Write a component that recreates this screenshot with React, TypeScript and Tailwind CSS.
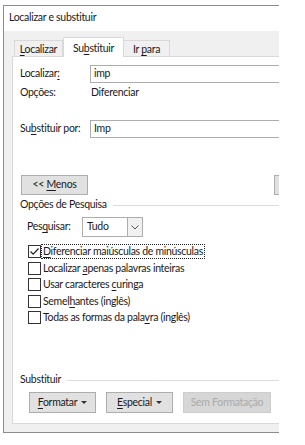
import React from "react";

const U = ({ children }: { children: React.ReactNode }) => (
  <span className="underline underline-offset-[2px] decoration-[1px]">{children}</span>
);

const Check = ({ checked, label, h, focus }: { checked?: boolean; label: React.ReactNode; h: string; focus?: boolean }) => (
  <div className={`flex items-center pl-[8px] ${h}`}>
    <div className="w-[13px] h-[13px] border border-[#333333] bg-white flex items-center justify-center shrink-0">
      {checked && (
        <svg width="11" height="11" viewBox="0 0 11 11">
          <path d="M1.5 5.5 L4.2 8.2 L9.5 2.5" fill="none" stroke="#222" strokeWidth="1.2" />
        </svg>
      )}
    </div>
    <div className={`ml-[1px] px-[1px] leading-[13px] ${focus ? "outline outline-1 outline-dotted outline-[#222]" : ""}`}>{label}</div>
  </div>
);

const Btn = ({ children, w, disabled }: { children: React.ReactNode; w: string; disabled?: boolean }) => (
  <div
    className={`${w} h-[21px] flex items-center justify-center border ${
      disabled ? "bg-[#d6d6d6] border-[#cdcdcd] text-[#ababab]" : "bg-[#e1e1e1] border-[#adadad]"
    }`}
  >
    {children}
  </div>
);

const Arrow = () => (
  <svg width="6" height="3" viewBox="0 0 6 3" className="ml-[4px]">
    <path d="M0 0 H6 L3 3 Z" fill="#333" />
  </svg>
);

export default function App() {
  return (
    <div
      className="w-[305px] h-[445px] bg-white overflow-hidden text-[10.5px] tracking-[-0.3px] text-[#1a1a1a]"
      style={{ fontFamily: "Lato, 'Noto Sans', sans-serif" }}
    >
      <div className="ml-[3px] mt-[5px] w-[276px] h-[428px] overflow-hidden border-t border-l border-b border-[#8c8c8c] flex flex-col">
        <div className="h-[25px] bg-white pl-[5px] pt-[4px] leading-[14px]">Localizar e substituir</div>
        <div className="flex-1 bg-[#f0f0f0] pl-[8px] flex flex-col">
          <div className="h-[25px] flex items-end pl-[2px] shrink-0">
            <div className="w-[49px] h-[16px] border border-b-0 border-[#d9d9d9] bg-[#f0f0f0] flex items-center justify-center leading-[14px] pt-[1px]">
              <span><U>L</U>ocalizar</span>
            </div>
            <div className="w-[61px] h-[20px] -mb-[1px] relative z-10 border border-b-0 border-[#d9d9d9] bg-white flex items-start justify-center pt-[3px] leading-[14px]">
              <span>Su<U>b</U>stituir</span>
            </div>
            <div className="w-[46px] h-[16px] border border-b-0 border-l-0 border-[#d9d9d9] bg-[#f0f0f0] flex items-center justify-center leading-[14px] pt-[1px]">
              <span>Ir <U>p</U>ara</span>
            </div>
          </div>
          <div className="w-[300px] h-[368px] bg-white border border-[#d9d9d9] pl-[7px] flex flex-col shrink-0">
            <div className="mt-[8px] h-[18px] flex items-center">
              <div className="w-[70px]">Localizar<U>:</U></div>
              <div className="flex-1 h-[18px] border border-[#adadad] pl-[3px] flex items-center">imp</div>
            </div>
            <div className="mt-[2px] h-[16px] flex items-center">
              <div className="w-[71px]">Opções:</div>
              <div>Diferenciar</div>
            </div>
            <div className="mt-[19px] h-[18px] flex items-center">
              <div className="w-[70px] whitespace-nowrap">Su<U>b</U>stituir por:</div>
              <div className="flex-1 h-[18px] border border-[#adadad] pl-[3px] flex items-center">Imp</div>
            </div>
            <div className="mt-[37px] h-[20px] flex items-center">
              <div className="ml-[1px] w-[67px] h-[20px] border border-[#adadad] bg-[#e1e1e1] flex items-center justify-center whitespace-pre">
                {"<< "}<U>M</U>enos
              </div>
              <div className="ml-[186px] w-[20px] h-[20px] border border-[#adadad] bg-[#e1e1e1]" />
            </div>
            <div className="mt-[2px] h-[16px] flex items-center">
              <div>Opções de Pesquisa</div>
              <div className="flex-1 ml-[6px] h-px bg-[#dcdcdc]" />
            </div>
            <div className="mt-[4px] h-[20px] flex items-center pl-[7px]">
              <div className="w-[55px]">Pes<U>q</U>uisar:</div>
              <div className="w-[61px] h-[20px] border border-[#adadad] flex">
                <div className="flex-1 pl-[4px] flex items-center">Tudo</div>
                <div className="w-[15px] h-full border-l border-[#adadad] bg-[#f0f0f0] flex items-center justify-center">
                  <svg width="8" height="5" viewBox="0 0 8 5">
                    <path d="M0.5 0.5 L4 4 L7.5 0.5" fill="none" stroke="#555" strokeWidth="1" />
                  </svg>
                </div>
              </div>
            </div>
            <div className="mt-[6px]">
              <Check h="h-[17px]" checked focus label={<span><U>D</U>iferenciar maiúsculas de minúsculas</span>} />
              <Check h="h-[16px]" label={<span>Localizar <U>a</U>penas palavras inteiras</span>} />
              <Check h="h-[17px]" label={<span>Usar caracteres <U>c</U>uringa</span>} />
              <Check h="h-[16px]" label={<span>Semel<U>h</U>antes (inglês)</span>} />
              <Check h="h-[16px]" label={<span>Todas as formas da pala<U>v</U>ra (inglês)</span>} />
            </div>
            <div className="mt-[47px] h-[16px] flex items-center">
              <div>Substituir</div>
              <div className="flex-1 ml-[6px] h-px bg-[#dcdcdc]" />
            </div>
            <div className="mt-[4px] flex items-center pl-[9px] gap-[10px]">
              <Btn w="w-[67px]"><span><U>F</U>ormatar</span><Arrow /></Btn>
              <Btn w="w-[67px]"><span><U>E</U>special</span><Arrow /></Btn>
              <Btn w="w-[88px]" disabled>Sem Formatação</Btn>
            </div>
          </div>
        </div>
      </div>
    </div>
  );
}
